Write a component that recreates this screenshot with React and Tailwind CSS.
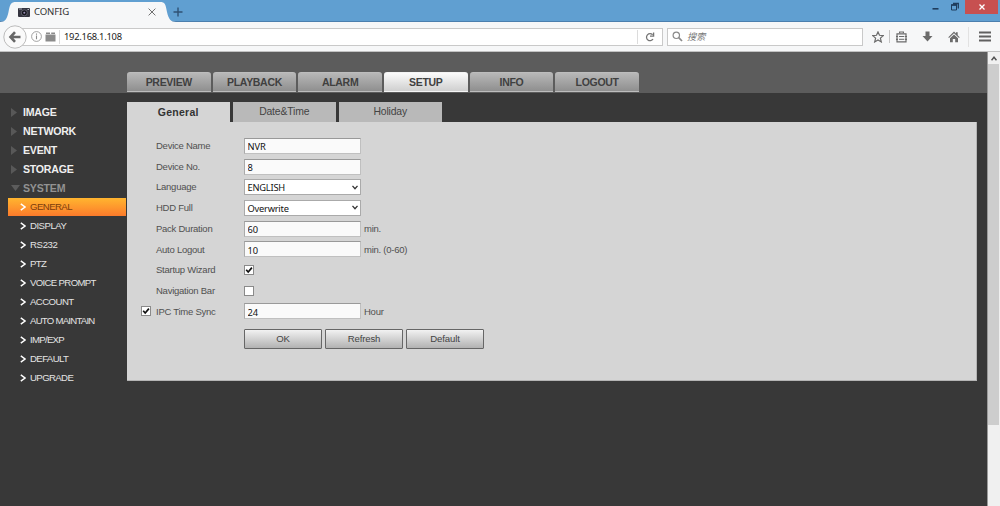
import { useState } from 'react';
import clsx from 'clsx';

const NAV = ['PREVIEW', 'PLAYBACK', 'ALARM', 'SETUP', 'INFO', 'LOGOUT'];
const GROUPS = ['IMAGE', 'NETWORK', 'EVENT', 'STORAGE'];
const SYSTEM_PAGES = [
  { name: 'GENERAL', spacing: 'tracking-[-0.55px]' },
  { name: 'DISPLAY', spacing: 'tracking-[-0.5px]' },
  { name: 'RS232', spacing: 'tracking-[-0.35px]' },
  { name: 'PTZ', spacing: 'tracking-[-0.6px]' },
  { name: 'VOICE PROMPT', spacing: 'tracking-[-0.65px]' },
  { name: 'ACCOUNT', spacing: 'tracking-[-0.55px]' },
  { name: 'AUTO MAINTAIN', spacing: 'tracking-[-0.75px]' },
  { name: 'IMP/EXP', spacing: 'tracking-[-0.7px]' },
  { name: 'DEFAULT', spacing: 'tracking-[-0.6px]' },
  { name: 'UPGRADE', spacing: 'tracking-[-0.6px]' },
];
const TABS = ['General', 'Date&Time', 'Holiday'];

function TitleBar() {
  return (
    <div className="flex h-[22px] items-start border-b border-[#4b7fae] bg-[#609fd1]">
      <svg className="mt-px h-[21px] w-4 shrink-0" viewBox="0 0 16 21">
        <path d="M0 21C5 21 7 18 8.500 11C10 3 11 1 16 1V21Z" fill="#f6f7f8" />
      </svg>
      <div className="mt-[2px] -mb-px flex h-[21px] w-[144px] shrink-0 items-center bg-[#f6f7f8] pb-px">
        <svg className="ml-[2px] h-[9px] w-3" viewBox="0 0 12 9">
          <rect width="12" height="9" rx="1" fill="#34343f" />
          <rect x="1" y="0" width="3" height="2" fill="#6d6d7a" />
          <circle cx="6.3" cy="4.8" r="3" fill="#14141c" stroke="#777785" strokeWidth="0.7" />
          <circle cx="6.3" cy="4.8" r="1" fill="#9a8fb5" />
          <rect x="9.5" y="1" width="1.5" height="1" fill="#b8b8c0" />
        </svg>
        <span className="ml-1 font-['Noto_Sans','Noto_Sans_CJK_SC',sans-serif] text-[9.6px] leading-none tracking-[-0.15px] text-[#333]">CONFIG</span>
        <svg className="mr-[4px] ml-auto h-2 w-2" viewBox="0 0 8 8" stroke="#707070" strokeWidth="1">
          <path d="M0.6 0.6 7.4 7.4M7.4 0.6 0.6 7.4" />
        </svg>
      </div>
      <svg className="mt-px h-[21px] w-4 shrink-0" viewBox="0 0 16 21">
        <path d="M16 21C11 21 8.500 18 7 11C5.500 3 5 1 0 1V21Z" fill="#f6f7f8" />
      </svg>
      <svg className="mt-[7px] -ml-[3px] h-[10px] w-[10px]" viewBox="0 0 10 10" stroke="#2f5274" strokeWidth="1.4">
        <path d="M5 0.500V9.500M0.500 5H9.500" />
      </svg>
      <div className="ml-auto flex items-start">
        <svg className="h-[14px] w-[33px]" viewBox="0 0 33 14" fill="none" stroke="#1f3c5c">
          <path d="M0.500 8.800H6.500" strokeWidth="1.600" />
          <path d="M19.500 5H24.500V10H19.500Z" strokeWidth="1" />
          <path d="M19 5H25M21 3.500H26.300V8.500" strokeWidth="1.300" />
        </svg>
        <div className="flex h-[14px] w-[33px] items-center justify-center bg-[#c75050]">
          <svg className="h-[6px] w-[6px]" viewBox="0 0 6 6" stroke="#fff" strokeWidth="1.300">
            <path d="M0.500 0.500 5.500 5.500M5.500 0.500 0.500 5.500" />
          </svg>
        </div>
        <div className="w-[2px]" />
      </div>
    </div>
  );
}

function AddressBar() {
  return (
    <div className="flex h-[30px] items-center border-b border-[#c2c2c2] bg-[#f6f7f8]">
      <svg className="relative z-10 ml-[3px] h-6 w-6 shrink-0" viewBox="0 0 24 24">
        <circle cx="12" cy="12" r="11.200" fill="#fafafa" stroke="#b4b4b4" strokeWidth="0.900" />
        <path d="M12 7.200 7.500 12 12 16.800M8 12H17.500" fill="none" stroke="#666" strokeWidth="2.600" />
      </svg>
      <div className="-ml-2 flex h-[18px] w-[644px] shrink-0 items-center border border-[#c9c9c9] bg-white">
        <svg className="ml-[11px] h-[11px] w-[11px] shrink-0" viewBox="0 0 11 11" fill="none" stroke="#8c8c8c">
          <circle cx="5.500" cy="5.500" r="4.900" strokeWidth="0.800" />
          <path d="M5.500 4.600V8.300M5.500 2.600V3.700" strokeWidth="1.100" />
        </svg>
        <svg className="ml-[3px] h-[10px] w-[11px] shrink-0" viewBox="0 0 11 10" fill="#8b8b8b">
          <path d="M0.500 2.500H10.500V9.500H0.500ZM1 0.500H5V2H1ZM6.200 0.500H10V2H6.200Z" />
        </svg>
        <div className="ml-[3px] h-[14px] w-px bg-[#dcdcdc]" />
        <span className="ml-1 font-['Noto_Sans',sans-serif] text-[9.400px] leading-none tracking-[-0.260px] text-[#222]">192.168.1.108</span>
        <div className="ml-auto h-[14px] w-px bg-[#dcdcdc]" />
        <svg className="mx-[7px] h-[10px] w-[10px]" viewBox="0 0 10 10" fill="none" stroke="#757575" strokeWidth="1.300">
          <path d="M8 7A3.500 3.500 0 1 1 7.600 2.800" />
          <path d="M8.600 0.600V4.200H5" />
        </svg>
      </div>
      <div className="ml-[4px] flex h-[18px] w-[196px] shrink-0 items-center border border-[#c9c9c9] bg-white">
        <svg className="ml-1 h-[11px] w-[11px]" viewBox="0 0 11 11" fill="none" stroke="#8a8a8a">
          <circle cx="4.300" cy="4.300" r="3.200" strokeWidth="1.200" />
          <path d="M6.700 6.700 10 10" strokeWidth="1.700" />
        </svg>
        <span className="ml-1 font-['Noto_Sans_CJK_SC',sans-serif] text-[9.200px] leading-none text-[#777] italic">搜索</span>
      </div>
      <svg className="ml-[9px] h-3 w-3" viewBox="0 0 12 12" fill="none" stroke="#6b6b6b" strokeWidth="1.200">
        <path d="M6 0.900 7.500 4.300 11.200 4.600 8.400 7.100 9.300 10.900 6 8.900 2.700 10.900 3.600 7.100 0.800 4.600 4.500 4.300Z" />
      </svg>
      <div className="ml-[5px] h-[13px] w-px bg-[#c4c4c4]" />
      <svg className="ml-[6px] h-3 w-[11px]" viewBox="0 0 11 12" fill="none" stroke="#6b6b6b">
        <path d="M1 2.800H10V10.800H1Z" strokeWidth="1.200" />
        <path d="M3 5.500H8.300M3 8.300H8.300" strokeWidth="1" />
        <path d="M0 5.500H2M0 8.300H2M9 5.500H11M9 8.300H11M3.600 2.300V1H7.400V2.300" strokeWidth="1.200" />
      </svg>
      <svg className="ml-[15px] h-[11px] w-[11px]" viewBox="0 0 11 11" fill="#6b6b6b">
        <path d="M3.500 0.500H7.500V5H10.500L5.500 10.500 0.500 5H3.500Z" />
      </svg>
      <svg className="ml-[15px] h-3 w-3" viewBox="0 0 12 12" fill="#6b6b6b">
        <path d="M6 0.600 8 2.500V1.300H9.700V4.200L11.700 6.200 11 7 6 2.300 1 7 0.300 6.200Z" />
        <path d="M6 3.500 10 7.200V11.200H7.200V8H4.800V11.200H2V7.200Z" />
      </svg>
      <div className="ml-[8px] h-5 w-px bg-[#e2e2e2]" />
      <svg className="ml-[10px] h-[11px] w-[12px]" viewBox="0 0 12 11" stroke="#606060" strokeWidth="2">
        <path d="M0 1.500H12M0 5.500H12M0 9.500H12" />
      </svg>
    </div>
  );
}

function SideMenu() {
  return (
    <aside className="w-[127px] shrink-0 pt-[9.500px] pl-2">
      {GROUPS.map((name) => (
        <div key={name} className="flex h-[19px] items-center pl-[3px] text-[10.600px] leading-none font-bold tracking-[-0.250px] text-[#efefef]">
          <svg className="mr-[6px] h-[9px] w-[6px]" viewBox="0 0 6 9" fill="#585858">
            <path d="M0 0 6 4.500 0 9Z" />
          </svg>
          <span className="pt-px">{name}</span>
        </div>
      ))}
      <div className="flex h-[19px] items-center pl-[3px] text-[10.600px] leading-none font-bold tracking-[-0.200px] text-[#929292]">
        <svg className="mr-[3px] h-[6px] w-[9px]" viewBox="0 0 9 6" fill="#5c5c5c">
          <path d="M0 0H9L4.500 6Z" />
        </svg>
        <span className="pt-px">SYSTEM</span>
      </div>
      {SYSTEM_PAGES.map(({ name, spacing }) => (
        <div key={name} className="h-[19px] pb-px">
          <div
            className={clsx(
              'flex h-[18px] w-[118px] items-center pl-3 text-[9.600px] leading-none',
              spacing,
              name === 'GENERAL'
                ? 'bg-linear-to-b from-[#ffb52f] to-[#fb7a2b] text-[#7b3e0c]'
                : 'text-[#e4e4e4]'
            )}
          >
            <svg className="mr-[4px] h-[8px] w-[6px]" viewBox="0 0 6 8" fill="none" stroke="#fff" strokeWidth="1.500">
              <path d="M0.800 0.900 5 4 0.800 7.100" />
            </svg>
            <span className="pt-[1.500px]">{name}</span>
          </div>
        </div>
      ))}
    </aside>
  );
}

function Row({ label, before, after, children }) {
  return (
    <div className="flex h-[20.700px] items-center">
      <div className="flex w-[29px] justify-end pr-[5px]">{before}</div>
      <div className="w-[88px]">{label}</div>
      {children}
      {after && <span className="ml-[3px]">{after}</span>}
    </div>
  );
}

function TextBox({ value }) {
  return (
    <input
      defaultValue={value}
      className="h-4 w-[117px] border border-[#c0c0c0] border-t-[#999] border-l-[#aaa] bg-[#fafafa] pt-[2px] pl-[2.500px] font-['Noto_Sans',sans-serif] text-[9.300px] leading-none tracking-[-0.100px] text-[#111] outline-none"
    />
  );
}

function SelectBox({ value }) {
  return (
    <div className="flex h-4 w-[117px] items-center justify-between border border-[#aaa] bg-white pr-[2px] pl-[2.500px] font-['Noto_Sans',sans-serif] text-[9.300px] leading-none tracking-[-0.230px] text-[#111]">
      <span className="pt-px">{value}</span>
      <svg className="h-[5px] w-[6px]" viewBox="0 0 6 5" fill="none" stroke="#333" strokeWidth="1.300">
        <path d="M0.500 0.800 3 3.700 5.500 0.800" />
      </svg>
    </div>
  );
}

function CheckBox({ initial }) {
  const [checked, setChecked] = useState(initial);
  return (
    <button onClick={() => setChecked(!checked)} className="h-[10px] w-[10px] border border-[#8a8a8a] bg-white">
      {checked && (
        <svg className="h-2 w-2" viewBox="0 0 8 8" fill="none" stroke="#111" strokeWidth="1.700">
          <path d="M1.200 3.700 3.200 6 6.900 1.600" />
        </svg>
      )}
    </button>
  );
}

function GeneralForm() {
  return (
    <div className="h-[259px] w-[850px] border-r border-b border-[#b4b4b4] bg-[#d5d5d5] pt-[13.500px] text-[9.500px] leading-none tracking-[-0.250px] text-[#505050]">
      <Row label="Device Name"><TextBox value="NVR" /></Row>
      <Row label="Device No."><TextBox value="8" /></Row>
      <Row label="Language"><SelectBox value="ENGLISH" /></Row>
      <Row label="HDD Full"><SelectBox value="Overwrite" /></Row>
      <Row label="Pack Duration" after="min."><TextBox value="60" /></Row>
      <Row label="Auto Logout" after="min. (0-60)"><TextBox value="10" /></Row>
      <Row label="Startup Wizard"><CheckBox initial /></Row>
      <Row label="Navigation Bar"><CheckBox initial={false} /></Row>
      <Row label="IPC Time Sync" before={<CheckBox initial />} after="Hour"><TextBox value="24" /></Row>
      <div className="mt-[7px] flex gap-[3px] pl-[117px]">
        {['OK', 'Refresh', 'Default'].map((name) => (
          <button
            key={name}
            className="h-5 w-[78px] rounded-[1px] border border-[#666] bg-linear-to-b from-[#f2f2f2] to-[#b2b2b2] pt-px text-[9.600px] leading-none tracking-[-0.150px] text-[#444]"
          >
            {name}
          </button>
        ))}
      </div>
    </div>
  );
}

export default function App() {
  const [tab, setTab] = useState('General');

  return (
    <div className="flex h-[506px] w-[1000px] flex-col overflow-hidden bg-[#383838] font-['Liberation_Sans',sans-serif]">
      <TitleBar />
      <AddressBar />
      <div className="flex min-h-0 flex-1">
        <main className="w-[987px]">
          <header className="flex h-[41px] items-end bg-[#5c5c5c] pb-px pl-[127px]">
            <nav className="grid h-5 w-[512px] grid-cols-6 gap-[2px]">
              {NAV.map((name) => (
                <div
                  key={name}
                  className={clsx(
                    'flex items-center justify-center rounded-t-[3px] border-t border-b bg-linear-to-b pt-px text-[10.500px] leading-none font-bold tracking-[-0.300px] text-[#404040]',
                    name === 'SETUP'
                      ? 'border-[#f4f4f4] from-[#fbfbfb] to-[#cfcfcf]'
                      : 'border-[#bdbdbd] from-[#b8b8b8] to-[#8f8f8f]'
                  )}
                >
                  {name}
                </div>
              ))}
            </nav>
          </header>
          <div className="flex">
            <SideMenu />
            <section className="pt-[9px]">
              <div className="flex h-5 gap-[3.500px]">
                {TABS.map((name) => (
                  <button
                    key={name}
                    onClick={() => setTab(name)}
                    className={clsx(
                      'w-[102.500px] leading-none',
                      tab === name
                        ? 'bg-[#d5d5d5] text-[10.500px] font-bold tracking-[0.250px] text-[#333]'
                        : 'bg-[#b9b9b9] pt-px text-[10.400px] tracking-[-0.150px] text-[#444]'
                    )}
                  >
                    {name}
                  </button>
                ))}
              </div>
              <GeneralForm />
            </section>
          </div>
        </main>
        <div className="w-[13px] border-l border-[#9a9a9a] bg-[#f0f0f0]">
          <div className="flex h-3 items-center justify-center">
            <svg className="h-[5px] w-[6px]" viewBox="0 0 6 5" fill="none" stroke="#505050" strokeWidth="1.500">
              <path d="M0.500 4.200 3 1.200 5.500 4.200" />
            </svg>
          </div>
          <div className="mr-px h-[361px] bg-[#cdcdcd]" />
        </div>
      </div>
    </div>
  );
}
